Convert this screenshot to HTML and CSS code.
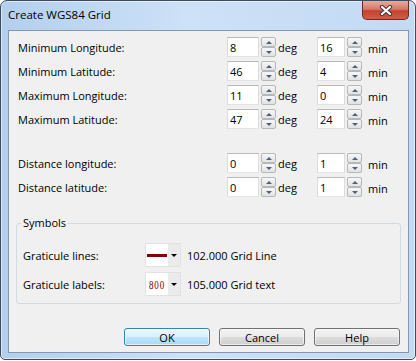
FILE: index.html
```html
<!DOCTYPE html>
<html lang="en">
<head>
    <meta charset="UTF-8">
    <title>Create WGS84 Grid</title>
    <link rel="stylesheet" href="styles.css">
</head>
<body>
    <div class="window">
        <div class="titlebar">
            <span class="title">Create WGS84 Grid</span>
            <button class="close-btn">
                <svg width="14" height="11" viewBox="0 0 14 11">
                    <path d="M3 2 L11 9 M11 2 L3 9" stroke="#3b3b3b" stroke-width="4.2" stroke-linecap="round"/>
                    <path d="M3 2 L11 9 M11 2 L3 9" stroke="#ffffff" stroke-width="2.2" stroke-linecap="round"/>
                </svg>
            </button>
        </div>

        <div class="client">
            <!-- Extent -->
            <div class="coords">
                <div class="row">
                    <span class="row-label">Minimum Longitude:</span>
                    <input class="num" type="text" value="8" readonly>
                    <div class="spin-btns"><span class="spin-up"></span><span class="spin-down"></span></div>
                    <span class="unit">deg</span>
                    <input class="num num-min" type="text" value="16" readonly>
                    <div class="spin-btns"><span class="spin-up"></span><span class="spin-down"></span></div>
                    <span class="unit unit-min">min</span>
                </div>
                <div class="row">
                    <span class="row-label">Minimum Latitude:</span>
                    <input class="num" type="text" value="46" readonly>
                    <div class="spin-btns"><span class="spin-up"></span><span class="spin-down"></span></div>
                    <span class="unit">deg</span>
                    <input class="num num-min" type="text" value="4" readonly>
                    <div class="spin-btns"><span class="spin-up"></span><span class="spin-down"></span></div>
                    <span class="unit unit-min">min</span>
                </div>
                <div class="row">
                    <span class="row-label">Maximum Longitude:</span>
                    <input class="num" type="text" value="11" readonly>
                    <div class="spin-btns"><span class="spin-up"></span><span class="spin-down"></span></div>
                    <span class="unit">deg</span>
                    <input class="num num-min" type="text" value="0" readonly>
                    <div class="spin-btns"><span class="spin-up"></span><span class="spin-down"></span></div>
                    <span class="unit unit-min">min</span>
                </div>
                <div class="row">
                    <span class="row-label">Maximum Latitude:</span>
                    <input class="num" type="text" value="47" readonly>
                    <div class="spin-btns"><span class="spin-up"></span><span class="spin-down"></span></div>
                    <span class="unit">deg</span>
                    <input class="num num-min" type="text" value="24" readonly>
                    <div class="spin-btns"><span class="spin-up"></span><span class="spin-down"></span></div>
                    <span class="unit unit-min">min</span>
                </div>
            </div>

            <!-- Spacing -->
            <div class="coords distance">
                <div class="row">
                    <span class="row-label">Distance longitude:</span>
                    <input class="num" type="text" value="0" readonly>
                    <div class="spin-btns"><span class="spin-up"></span><span class="spin-down"></span></div>
                    <span class="unit">deg</span>
                    <input class="num num-min" type="text" value="1" readonly>
                    <div class="spin-btns"><span class="spin-up"></span><span class="spin-down"></span></div>
                    <span class="unit unit-min">min</span>
                </div>
                <div class="row">
                    <span class="row-label">Distance latitude:</span>
                    <input class="num" type="text" value="0" readonly>
                    <div class="spin-btns"><span class="spin-up"></span><span class="spin-down"></span></div>
                    <span class="unit">deg</span>
                    <input class="num num-min" type="text" value="1" readonly>
                    <div class="spin-btns"><span class="spin-up"></span><span class="spin-down"></span></div>
                    <span class="unit unit-min">min</span>
                </div>
            </div>

            <!-- Symbols -->
            <fieldset class="symbols">
                <legend>Symbols</legend>
                <div class="sym-row">
                    <span class="sym-label">Graticule lines:</span>
                    <div class="combo">
                        <div class="combo-value"><span class="line-swatch"></span></div>
                        <div class="combo-arrow"></div>
                    </div>
                    <span class="sym-name">102.000 Grid Line</span>
                </div>
                <div class="sym-row">
                    <span class="sym-label">Graticule labels:</span>
                    <div class="combo">
                        <div class="combo-value"><span class="label-swatch">800</span></div>
                        <div class="combo-arrow"></div>
                    </div>
                    <span class="sym-name">105.000 Grid text</span>
                </div>
            </fieldset>

            <div class="buttons">
                <button class="btn btn-default">OK</button>
                <button class="btn">Cancel</button>
                <button class="btn">Help</button>
            </div>
        </div>
    </div>
</body>
</html>
```

FILE: styles.css
```css
* {
    margin: 0;
    padding: 0;
    box-sizing: border-box;
}

body {
    width: 416px;
    height: 361px;
    background: #ffffff;
    font-family: 'Open Sans', sans-serif;
    font-size: 11px;
    color: #000;
    overflow: hidden;
}

.window {
    width: 416px;
    height: 360px;
    display: flex;
    flex-direction: column;
    padding: 0 6px 6px 7px;
    border: 1px solid #3c4b5e;
    border-radius: 7px 7px 5px 5px;
    background: linear-gradient(to right, #b3cfed, #cde1f7 45%, #c3daf3);
    box-shadow: inset 0 0 0 1px rgba(255, 255, 255, 0.55);
}

.titlebar {
    height: 29px;
    display: flex;
    align-items: flex-start;
}

.title {
    padding-top: 6px;
    font-size: 11.5px;
    line-height: 16px;
}

.close-btn {
    margin-left: auto;
    width: 47px;
    height: 19px;
    border: 1px solid #6e2b24;
    border-top: none;
    border-radius: 0 0 5px 5px;
    background: linear-gradient(#e8aa9e, #d6796a 45%, #c4432f 55%, #d15c46);
    display: flex;
    align-items: center;
    justify-content: center;
}

.client {
    flex: 1;
    display: flex;
    flex-direction: column;
    background: #f0f0f0;
    border: 1px solid #8497b0;
}

.coords {
    padding: 4px 0 0 9px;
}

.distance {
    padding-top: 20px;
}

.row {
    display: flex;
    align-items: center;
    height: 24px;
}

.row-label {
    width: 209px;
}

.num {
    width: 32px;
    height: 20px;
    padding: 0 2px;
    border: 1px solid;
    border-color: #b9b9b9 #dcdcdc #e4e4e4 #dcdcdc;
    background: #fff;
    font: inherit;
    color: #000;
    outline: none;
}

.num-min {
    width: 28px;
}

.spin-btns {
    width: 15px;
    height: 20px;
    margin-left: 2px;
    display: flex;
    flex-direction: column;
}

.spin-btns span {
    flex: 1;
    display: flex;
    align-items: center;
    justify-content: center;
    border: 1px solid #b7b7b7;
    border-radius: 2px;
    background: linear-gradient(#f7f7f7, #e2e2e2);
}

.spin-up::after,
.spin-down::after {
    content: '';
    border-left: 3px solid transparent;
    border-right: 3px solid transparent;
}

.spin-up::after {
    border-bottom: 3px solid #4f5f82;
}

.spin-down::after {
    border-top: 3px solid #4f5f82;
}

.unit {
    width: 41px;
    padding-left: 2px;
}

.unit-min {
    width: auto;
    padding: 3px 0 0 6px;
}

.symbols {
    margin: 16px 7px 0;
    padding: 12px 6px 7px;
    border: 1px solid #d3dbe2;
    border-radius: 3px;
}

.symbols legend {
    margin-left: -2px;
    padding: 0 2px;
    line-height: 16px;
}

.sym-row {
    display: flex;
    align-items: center;
    height: 24px;
}

.sym-row + .sym-row {
    margin-top: 5px;
}

.sym-label {
    width: 122px;
}

.combo {
    width: 36px;
    height: 24px;
    display: flex;
    border: 1px solid #e2e2e2;
    background: #fff;
}

.combo-value {
    width: 22px;
    display: flex;
    align-items: center;
    justify-content: center;
}

.combo-arrow {
    flex: 1;
    display: flex;
    align-items: center;
    justify-content: center;
    background: #ebebeb;
}

.combo-arrow::after {
    content: '';
    border-left: 3px solid transparent;
    border-right: 3px solid transparent;
    border-top: 3px solid #000;
}

.line-swatch {
    width: 20px;
    height: 3px;
    background: #800000;
}

.label-swatch {
    font-family: 'Liberation Serif', serif;
    font-size: 10px;
    letter-spacing: 1px;
    color: #800000;
    transform: scale(0.9, 1.2);
}

.sym-name {
    margin-left: 6px;
}

.buttons {
    margin-top: auto;
    display: flex;
    justify-content: flex-end;
    gap: 9px;
    padding: 0 8px 6px 0;
}

.btn {
    width: 86px;
    height: 18px;
    border: 1px solid #707070;
    border-radius: 3px;
    background: linear-gradient(#f2f2f2, #ebebeb 50%, #dddddd 50%, #cfcfcf);
    font: inherit;
    color: #000;
    box-shadow: inset 0 0 0 1px rgba(255, 255, 255, 0.6);
}

.btn-default {
    border-color: #3c7fb1;
    background: linear-gradient(#eaf6fd, #d9f0fc 50%, #bee6fd 50%, #a7d9f5);
}
```
